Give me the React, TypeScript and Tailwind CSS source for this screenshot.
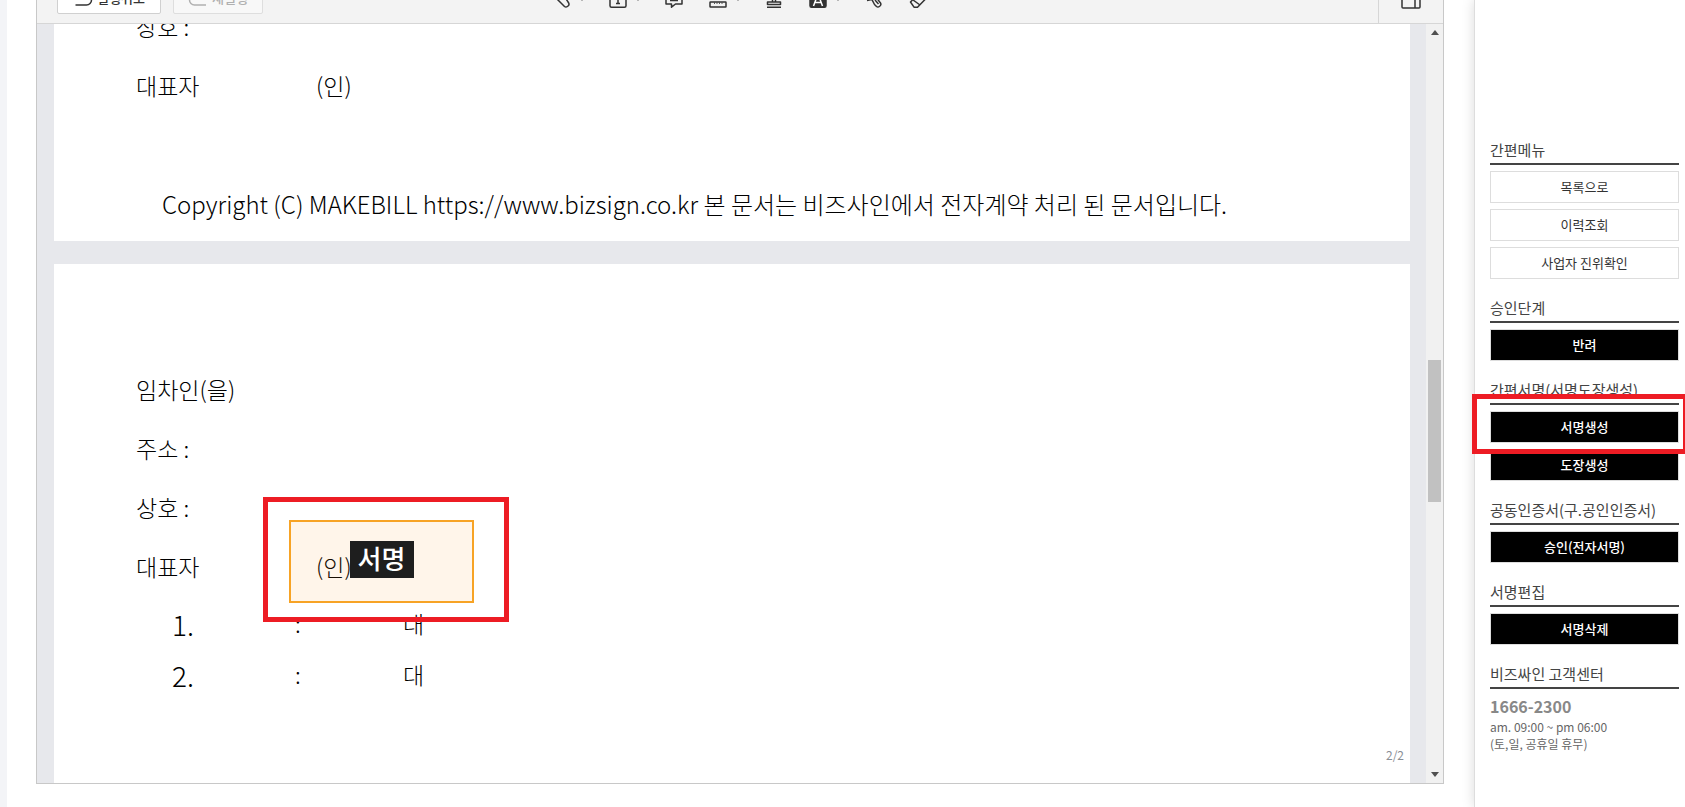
import type { ReactNode } from "react";

type Tool = {
  label: string;
  caret?: boolean;
  icon: ReactNode;
};

type MenuSection = {
  title: string;
  items: string[];
  dark?: boolean;
  highlighted?: string;
};

const tools: Tool[] = [
  {
    label: "펜",
    caret: true,
    icon: <path d="M1.500 1.500l3.500 9.500 7.500 7.500c1.800 1.500 5.500-1 4.200-3.500L11 6z" />,
  },
  {
    label: "텍스트",
    caret: true,
    icon: (
      <>
        <rect x="2" y="3" width="16" height="16.200" rx="1.500" />
        <path d="M6.500 7.500h7M10 7.500v8M8 15.500h4" />
      </>
    ),
  },
  {
    label: "메모",
    icon: <path d="M2 3h16v13h-6.500L7.500 19.200V16H2zM6 8h8M6 12.500h8" />,
  },
  {
    label: "측정",
    caret: true,
    icon: (
      <>
        <rect x="2" y="14" width="16" height="5" rx="0.500" />
        <path d="M6.500 14.500v1.500M9 14.500v1.500M11.500 14.500v1.500M14 14.500v1.500" strokeWidth="0.8" />
        <path d="M3 8h14M3 6v4M17 6v4" />
      </>
    ),
  },
  {
    label: "도장",
    icon: (
      <>
        <path d="M8.500 14V9a3.500 3.500 0 1 1 3 0v5" />
        <path d="M3.500 16.500V14h13v2.500zM3 19.200h14" />
      </>
    ),
  },
  {
    label: "강조",
    caret: true,
    icon: (
      <>
        <rect x="2" y="3" width="16" height="16.200" rx="1.500" fill="#333" />
        <path d="M5.500 18L10 6l4.500 12M7 14.500h6" stroke="#fff" />
      </>
    ),
  },
  {
    label: "서명",
    icon: (
      <>
        <path d="M4 4l6.500 12.500 2 2c1.800 1.500 5.500-1 4-3.500L8 4z" />
        <path d="M3 12.500l7-1.500M11 12l3.500 4" />
      </>
    ),
  },
  {
    label: "지우개",
    icon: <path d="M2.500 14L12 4.500l6 6-8.500 8.700H6zM5 12l7 5" />,
  },
];

const menu: MenuSection[] = [
  { title: "간편메뉴", items: ["목록으로", "이력조회", "사업자 진위확인"] },
  { title: "승인단계", items: ["반려"], dark: true },
  {
    title: "간편서명(서명도장생성)",
    items: ["서명생성", "도장생성"],
    dark: true,
    highlighted: "서명생성",
  },
  { title: "공동인증서(구.공인인증서)", items: ["승인(전자서명)"], dark: true },
  { title: "서명편집", items: ["서명삭제"], dark: true },
];

function Icon({ children }: { children: ReactNode }) {
  return (
    <svg
      viewBox="0 0 20 20"
      className="h-5 w-5 shrink-0"
      fill="none"
      stroke="currentColor"
      strokeWidth="1.5"
      strokeLinejoin="round"
    >
      {children}
    </svg>
  );
}

function Toolbar() {
  return (
    <div className="flex h-6 shrink-0 items-end overflow-hidden border-b border-[#d6d6d6] bg-[#f3f3f3] text-[#333]">
      <div className="flex-1">
        <div className="flex gap-3 pb-[9px] pl-5">
          <button className="flex h-8 w-[104px] shrink-0 items-center justify-center gap-1 rounded-xs border border-[#d0d0d0] bg-white text-[13px] font-medium">
            <Icon>
              <path d="M5 4L2 7l3 3M2 7h11.500a5 5 0 0 1 0 10H2.500" />
            </Icon>
            실행취소
          </button>
          <button
            disabled
            className="flex h-8 w-[90px] shrink-0 items-center justify-center gap-1 rounded-xs border border-[#dedede] bg-[#f8f8f8] text-[13px] font-medium text-[#b0b0b0]"
          >
            <Icon>
              <path d="M15 4l3 3-3 3M18 7H6.500a5 5 0 0 0 0 10H18" />
            </Icon>
            재실행
          </button>
        </div>
      </div>
      <div className="flex pb-[9px]">
        {tools.map((tool) => (
          <button
            key={tool.label}
            aria-label={tool.label}
            className={
              tool.caret
                ? "flex h-8 items-center gap-1.5 pr-2.5 pl-3"
                : "flex h-8 items-center px-3"
            }
          >
            <Icon>{tool.icon}</Icon>
            {tool.caret && (
              <svg viewBox="0 0 8 6" className="h-1.5 w-2" fill="currentColor">
                <path d="M1 1h6L4 6z" />
              </svg>
            )}
          </button>
        ))}
      </div>
      <div className="flex flex-1 justify-end">
        <button
          aria-label="패널"
          className="flex h-10 w-[65px] items-center justify-center border-l border-[#d6d6d6] pb-[9px]"
        >
          <Icon>
            <rect x="1" y="3" width="18" height="16" rx="1" />
            <path d="M14 3v16" />
          </Icon>
        </button>
      </div>
    </div>
  );
}

function DocRow({ label, value }: { label?: string; value?: string }) {
  return (
    <div className="flex h-[59px] shrink-0 items-center pl-[82px]">
      <span className="w-[180px]">{label}</span>
      <span>{value}</span>
    </div>
  );
}

function ListRow({ no }: { no: string }) {
  return (
    <li className="flex h-[51px] items-center pl-[118px]">
      <span className="w-[123px] text-[28px]">{no}</span>
      <span className="w-[108px]">:</span>
      <span>대</span>
    </li>
  );
}

function SignField() {
  return (
    <div className="absolute top-[233px] left-[209px] h-[125px] w-[246px] border-5 border-[#ed1c24] pt-[18px] pl-[21px]">
      <button className="flex h-[83px] w-[185px] items-center justify-center border-2 border-[#f7a325] bg-[#ff8c1a]/9 pb-1">
        <span className="flex h-[37px] w-16 items-center justify-center bg-[#1e1e1e] pb-1 text-[26px] font-medium text-white">
          서명
        </span>
      </button>
    </div>
  );
}

function Scrollbar() {
  return (
    <div className="flex w-[17px] shrink-0 flex-col items-center bg-[#f1f1f1] py-1.5 text-[#505050]">
      <svg viewBox="0 0 8 5" className="h-[5px] w-2" fill="currentColor">
        <path d="M0 5h8L4 0z" />
      </svg>
      <div className="flex w-full flex-1 flex-col items-center">
        <div className="grow-325" />
        <div className="h-[142px] w-[13px] bg-[#c1c1c1]" />
        <div className="grow-270" />
      </div>
      <svg viewBox="0 0 8 5" className="h-[5px] w-2" fill="currentColor">
        <path d="M0 0h8L4 5z" />
      </svg>
    </div>
  );
}

function Viewer() {
  return (
    <section className="flex flex-1 flex-col border-x border-b border-[#c8c8c8]">
      <Toolbar />
      <div className="flex flex-1">
        <div className="flex flex-1 flex-col gap-[23px] bg-[#e7e8ec] pr-4 pl-[17px] text-[23px] leading-none font-light text-black">
          <article className="flex h-[217px] flex-col justify-end overflow-hidden bg-white pb-2">
            <DocRow label="상호 :" />
            <DocRow label="대표자" value="(인)" />
            <DocRow />
            <p className="flex h-[59px] shrink-0 items-center pl-[108px] text-[24px] whitespace-nowrap">
              Copyright (C) MAKEBILL https://www.bizsign.co.kr 본 문서는 비즈사인에서
              전자계약 처리 된 문서입니다.
            </p>
          </article>
          <article className="relative flex flex-1 flex-col bg-white pt-24">
            <DocRow label="임차인(을)" />
            <DocRow label="주소 :" />
            <DocRow label="상호 :" />
            <DocRow label="대표자" value="(인)" />
            <ol className="pt-0.5">
              <ListRow no="1." />
              <ListRow no="2." />
            </ol>
            <span className="mt-auto self-end pr-1.5 pb-5 text-xs font-normal text-[#8a8f96]">
              2/2
            </span>
            <SignField />
          </article>
        </div>
        <Scrollbar />
      </div>
    </section>
  );
}

function SectionTitle({ children }: { children: ReactNode }) {
  return (
    <h2 className="flex h-7 items-center border-b-2 border-[#444] text-[15px] whitespace-nowrap text-[#444]">
      {children}
    </h2>
  );
}

function QuickMenu() {
  return (
    <aside className="flex w-[211px] shrink-0 flex-col gap-4 border-l border-[#ddd] bg-white pt-[137px] pr-1.5 pl-[15px] shadow-[0_0_12px_rgba(0,0,0,0.15)]">
      {menu.map((section) => (
        <div key={section.title}>
          <SectionTitle>{section.title}</SectionTitle>
          <div className="flex flex-col gap-1.5 pt-1.5">
            {section.items.map((item) => (
              <div key={item} className="relative">
                <button
                  className={
                    section.dark
                      ? "block h-8 w-full border border-[#ddd] bg-black text-[13px] font-medium text-white"
                      : "block h-8 w-full border border-[#ddd] bg-white text-[13px] text-[#333]"
                  }
                >
                  {item}
                </button>
                {section.highlighted === item && (
                  <div className="pointer-events-none absolute -top-[17px] -right-[9px] -bottom-[11px] -left-[18px] z-10 border-5 border-[#ed1c24]" />
                )}
              </div>
            ))}
          </div>
        </div>
      ))}
      <div>
        <SectionTitle>비즈싸인 고객센터</SectionTitle>
        <p className="pt-[5px] text-base leading-6 font-bold text-[#888]">1666-2300</p>
        <p className="text-xs leading-[17px] text-[#666]">
          am. 09:00 ~ pm 06:00
          <br />
          (토,일, 공휴일 휴무)
        </p>
      </div>
    </aside>
  );
}

export default function App() {
  return (
    <div className="flex min-h-screen overflow-hidden bg-white font-['Noto_Sans_CJK_KR',sans-serif]">
      <div className="w-[7px] shrink-0 bg-[#f3f4f7]" />
      <main className="flex flex-1 flex-col pr-[30px] pb-[23px] pl-[29px]">
        <Viewer />
      </main>
      <QuickMenu />
    </div>
  );
}
